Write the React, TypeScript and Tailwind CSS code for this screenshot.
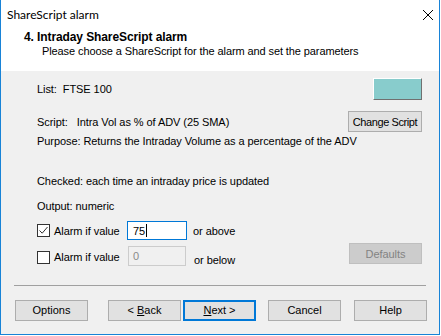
import React from "react";

const font = { fontFamily: '"Liberation Sans", Arial, sans-serif' };

function Btn({ children, className = "", focused = false }: { children: React.ReactNode; className?: string; focused?: boolean }) {
  return (
    <div
      className={
        "h-[21px] w-[73px] flex items-center justify-center bg-[#e1e1e1] text-[11px] text-black " +
        (focused ? "border-2 border-[#0078d7]" : "border border-[#adadad]") +
        " " +
        className
      }
    >
      {children}
    </div>
  );
}

function Check({ checked }: { checked: boolean }) {
  return (
    <div className="w-[13px] h-[13px] border border-[#333333] bg-white flex items-center justify-center shrink-0">
      {checked && (
        <svg width="11" height="11" viewBox="0 0 11 11">
          <path d="M1.5 5.5 L4.2 8.2 L9.5 2" fill="none" stroke="#333" strokeWidth="1" />
        </svg>
      )}
    </div>
  );
}

export default function App() {
  return (
    <div className="w-[441px] h-[336px] bg-white" style={font}>
      <div className="w-[440px] h-[335px] border-l border-r border-b border-[#1883d7] bg-[#f0f0f0] flex flex-col">
        <div className="h-[30px] bg-white flex items-center justify-between pl-[6px] pr-[5px]">
          <span className="text-[12px] text-black" style={{ fontFamily: 'Lato, "Open Sans", sans-serif' }}>
            ShareScript alarm
          </span>
          <svg width="12" height="12" viewBox="0 0 12 12">
            <path d="M1 1 L11 11 M11 1 L1 11" stroke="#000" strokeWidth="1" />
          </svg>
        </div>
        <div className="h-[41px] bg-white flex flex-col pl-[23px] text-[11px] text-black leading-[14px]">
          <div className="font-bold text-[12px] tracking-[-0.1px]">4. Intraday ShareScript alarm</div>
          <div className="pl-[18px] tracking-[-0.1px]">Please choose a ShareScript for the alarm and set the parameters</div>
        </div>
        <div className="flex flex-col pl-[36px] pr-[17px] text-[11px] text-black leading-[14px] tracking-[-0.07px]">
          <div className="mt-[7px] h-[22px] flex items-center justify-between">
            <span>List:&nbsp; FTSE 100</span>
            <div className="w-[49px] h-[22px] bg-[#88cccc] border-t border-l border-white border-r border-b border-r-[#707070] border-b-[#707070]" />
          </div>
          <div className="mt-[11px] h-[21px] flex items-center justify-between">
            <span>Script:&nbsp;&nbsp; Intra Vol as % of ADV (25 SMA)</span>
            <div className="h-[21px] w-[74px] flex items-center justify-center bg-[#e1e1e1] border border-[#adadad] tracking-[-0.4px]">Change Script</div>
          </div>
          <div className="mt-[2px] h-[14px] flex items-center">Purpose: Returns the Intraday Volume as a percentage of the ADV</div>
          <div className="mt-[26px] h-[14px] flex items-center">Checked: each time an intraday price is updated</div>
          <div className="mt-[11px] h-[14px] flex items-center">Output: numeric</div>
          <div className="mt-[8px] h-[19px] flex items-center">
            <Check checked />
            <span className="ml-[4px] w-[73px]">Alarm if value</span>
            <div className="w-[60px] h-[19px] border border-[#0078d7] bg-white flex items-center pl-[5px]">
              75<span className="inline-block w-px h-[13px] bg-black ml-[1px]" />
            </div>
            <span className="ml-[6px]">or above</span>
          </div>
          <div className="mt-[3px] h-[23px] flex items-start">
            <div className="mt-[7px] flex items-center">
              <Check checked={false} />
              <span className="ml-[4px] w-[74px]">Alarm if value</span>
            </div>
            <div className="mt-[3px] w-[58px] h-[20px] border border-[#cccccc] bg-[#f0f0f0] flex items-center pl-[4px] text-[#8a8a8a]">0</div>
            <span className="mt-[10px] ml-[8px]">or below</span>
            <div className="ml-auto h-[21px] w-[73px] flex items-center justify-center bg-[#cccccc] border border-[#bfbfbf] text-[#838383]">Defaults</div>
          </div>
        </div>
        <div className="mt-[19px] mx-[13px] h-px bg-[#a0a0a0]" />
        <div className="mt-[14px] flex pl-[14px]">
          <Btn>Options</Btn>
          <Btn className="ml-[20px]">
            &lt; <u className="ml-[3px]">B</u>ack
          </Btn>
          <Btn className="ml-[2px]" focused>
            <u>N</u>ext &gt;
          </Btn>
          <Btn className="ml-[12px]">Cancel</Btn>
          <Btn className="ml-[13px]">Help</Btn>
        </div>
      </div>
    </div>
  );
}
